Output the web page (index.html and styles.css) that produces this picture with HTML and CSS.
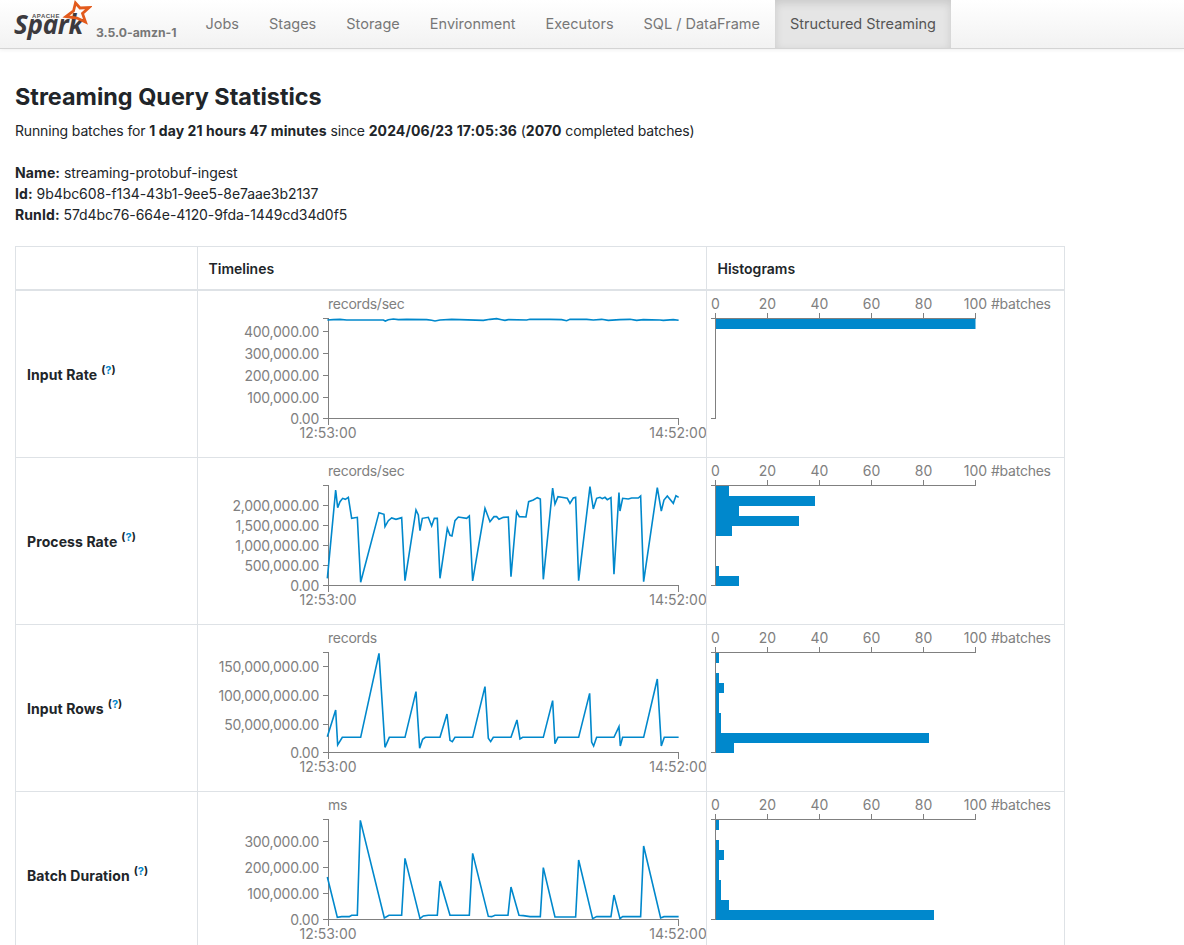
FILE: index.html
```html
<!DOCTYPE html>
<html lang="en">
<head>
<meta charset="utf-8">
<title>Streaming Query Statistics</title>
<link rel="stylesheet" href="styles.css">
</head>
<body>
<nav class="navbar">
  <a class="brand">
    <span class="logo">
      <span class="apache">APACHE</span>
      <span class="spark">Spark</span>
      <svg class="star" viewBox="0 0 34 30" width="34" height="30"><polygon class="star-shape" points="17.500,3 22,8 31,7.500 24.500,13.500 27.500,22 19,18 8,16.500 15.500,11"/></svg>
    </span>
    <span class="version">3.5.0-amzn-1</span>
  </a>
  <ul class="tabs">
    <li class="tab">Jobs</li>
    <li class="tab">Stages</li>
    <li class="tab">Storage</li>
    <li class="tab">Environment</li>
    <li class="tab">Executors</li>
    <li class="tab">SQL / DataFrame</li>
    <li class="tab active">Structured Streaming</li>
  </ul>
</nav>
<main class="content">
  <h3 class="title">Streaming Query Statistics</h3>
  <p class="summary">Running batches for <strong>1 day 21 hours 47 minutes</strong> since <strong>2024/06/23 17:05:36</strong> (<strong>2070</strong> completed batches)</p>
  <p class="meta"><strong>Name:</strong> streaming-protobuf-ingest<br><strong>Id:</strong> 9b4bc608-f134-43b1-9ee5-8e7aae3b2137<br><strong>RunId:</strong> 57d4bc76-664e-4120-9fda-1449cd34d0f5</p>
  <table class="stats">
    <colgroup><col class="c1"><col class="c2"><col class="c3"></colgroup>
    <thead><tr><th></th><th>Timelines</th><th>Histograms</th></tr></thead>
    <tbody>
      <tr>
        <td class="label"><strong>Input Rate</strong> <sup class="help">(<a>?</a>)</sup></td>
        <td class="chart"><svg class="plot" width="508" height="166">
          <text class="t unit" x="130" y="18">records/sec</text>
          <path class="axis" d="M124.500 27.500H130.500V127.500H480.500V133.500M130.500 127.500V133.500M124.500 40.500H130.500M124.500 62.500H130.500M124.500 84.500H130.500M124.500 106.500H130.500M124.500 127.500H130.500"/>
          <text class="t yl" x="121" y="40">400,000.00</text><text class="t yl" x="121" y="62">300,000.00</text><text class="t yl" x="121" y="84">200,000.00</text><text class="t yl" x="121" y="106">100,000.00</text><text class="t yl" x="121" y="127.500">0.00</text>
          <text class="t xl" x="130" y="147">12:53:00</text><text class="t xl" x="480" y="147">14:52:00</text>
          <g transform="translate(122 4) scale(.3333)"><polyline class="line" points="22,75 40,74 60,73 80,75 190,75 196,78 205,74 220,72 235,74 260,73 320,74 335,76 345,78 360,75 395,73 420,74 490,76 510,73 530,71 545,74 555,76 565,74 620,75 630,73 690,73 725,74 740,77 750,73 800,73 820,75 845,73 865,76 900,74 930,73 950,76 970,74 1020,75 1030,76 1060,74 1076,76"/></g>
        </svg></td>
        <td class="chart"><svg class="plot" width="358" height="166">
          <rect class="bar" x="8.500" y="28" width="260" height="10"/>
          <path class="axis" d="M3.500 27.500H8.500V127.500H3.500M8.500 21.500V27.500H268.500V21.500M60.500 21.500V27.500M112.500 21.500V27.500M164.500 21.500V27.500M216.500 21.500V27.500"/>
          <text class="t xl" x="8.500" y="18">0</text><text class="t xl" x="60.500" y="18">20</text><text class="t xl" x="112.500" y="18">40</text><text class="t xl" x="164.500" y="18">60</text><text class="t xl" x="216.500" y="18">80</text><text class="t xl" x="268.500" y="18">100</text><text class="t unit" x="284" y="18">#batches</text>
        </svg></td>
      </tr>
      <tr>
        <td class="label"><strong>Process Rate</strong> <sup class="help">(<a>?</a>)</sup></td>
        <td class="chart"><svg class="plot" width="508" height="166">
          <text class="t unit" x="130" y="18">records/sec</text>
          <path class="axis" d="M124.500 27.500H130.500V127.500H480.500V133.500M130.500 127.500V133.500M124.500 47.500H130.500M124.500 67.500H130.500M124.500 87.500H130.500M124.500 107.500H130.500M124.500 127.500H130.500"/>
          <text class="t yl" x="121" y="47">2,000,000.00</text><text class="t yl" x="121" y="67">1,500,000.00</text><text class="t yl" x="121" y="87">1,000,000.00</text><text class="t yl" x="121" y="107">500,000.00</text><text class="t yl" x="121" y="127.500">0.00</text>
          <text class="t xl" x="130" y="147">12:53:00</text><text class="t xl" x="480" y="147">14:52:00</text>
          <g transform="translate(122 2) scale(.3333)"><polyline class="line" points="22,355 47,90 53,143 60,125 68,115 76,118 85,112 95,175 112,172 122,367 177,158 192,163 195,200 205,182 215,174 228,178 245,173 255,362 288,150 295,165 300,212 307,175 325,172 335,198 343,175 352,175 360,355 382,205 390,226 396,228 405,182 415,171 440,175 448,168 458,363 495,145 510,185 522,170 530,170 537,178 550,172 565,171 573,350 590,155 598,170 618,171 626,125 640,120 652,113 661,117 670,358 698,84 705,132 714,110 725,112 742,115 750,130 760,114 767,112 776,362 810,80 820,147 830,115 840,112 847,116 855,112 862,119 873,113 882,343 897,98 900,153 908,115 925,117 935,114 955,114 962,108 971,365 1012,83 1024,153 1032,120 1042,108 1060,130 1068,107 1076,112"/></g>
        </svg></td>
        <td class="chart"><svg class="plot" width="358" height="166">
          <rect class="bar" x="8.500" y="28" width="13.500" height="10"/><rect class="bar" x="8.500" y="38" width="99.500" height="10"/><rect class="bar" x="8.500" y="48" width="23.500" height="10"/><rect class="bar" x="8.500" y="58" width="83.500" height="10"/><rect class="bar" x="8.500" y="68" width="16.500" height="10"/><rect class="bar" x="8.500" y="108" width="3.500" height="10"/><rect class="bar" x="8.500" y="118" width="23.500" height="10"/>
          <path class="axis" d="M3.500 27.500H8.500V127.500H3.500M8.500 21.500V27.500H268.500V21.500M60.500 21.500V27.500M112.500 21.500V27.500M164.500 21.500V27.500M216.500 21.500V27.500"/>
          <text class="t xl" x="8.500" y="18">0</text><text class="t xl" x="60.500" y="18">20</text><text class="t xl" x="112.500" y="18">40</text><text class="t xl" x="164.500" y="18">60</text><text class="t xl" x="216.500" y="18">80</text><text class="t xl" x="268.500" y="18">100</text><text class="t unit" x="284" y="18">#batches</text>
        </svg></td>
      </tr>
      <tr>
        <td class="label"><strong>Input Rows</strong> <sup class="help">(<a>?</a>)</sup></td>
        <td class="chart"><svg class="plot" width="508" height="166">
          <text class="t unit" x="130" y="18">records</text>
          <path class="axis" d="M124.500 27.500H130.500V127.500H480.500V133.500M130.500 127.500V133.500M124.500 41.500H130.500M124.500 70.500H130.500M124.500 99.500H130.500M124.500 127.500H130.500"/>
          <text class="t yl" x="121" y="41.500">150,000,000.00</text><text class="t yl" x="121" y="70">100,000,000.00</text><text class="t yl" x="121" y="99">50,000,000.00</text><text class="t yl" x="121" y="127.500">0.00</text>
          <text class="t xl" x="130" y="147">12:53:00</text><text class="t xl" x="480" y="147">14:52:00</text>
          <g transform="translate(122 5) scale(.3333)"><polyline class="line" points="22,320 47,240 53,345 67,322 122,322 177,70 195,352 208,322 255,322 288,185 299,355 308,328 316,322 360,322 381,252 390,331 397,335 405,322 458,322 495,170 505,325 512,335 520,322 573,322 591,270 600,327 608,322 670,322 698,212 705,341 714,322 776,322 809,190 815,336 821,348 830,322 882,322 897,290 901,348 908,322 971,322 1012,147 1024,348 1033,322 1076,322"/></g>
        </svg></td>
        <td class="chart"><svg class="plot" width="358" height="166">
          <rect class="bar" x="8.500" y="28" width="3.500" height="10"/><rect class="bar" x="8.500" y="48" width="3.500" height="10"/><rect class="bar" x="8.500" y="58" width="8.500" height="10"/><rect class="bar" x="8.500" y="68" width="3.500" height="20"/><rect class="bar" x="8.500" y="88" width="5.500" height="20"/><rect class="bar" x="8.500" y="108" width="213.500" height="10"/><rect class="bar" x="8.500" y="118" width="18.500" height="10"/>
          <path class="axis" d="M3.500 27.500H8.500V127.500H3.500M8.500 21.500V27.500H268.500V21.500M60.500 21.500V27.500M112.500 21.500V27.500M164.500 21.500V27.500M216.500 21.500V27.500"/>
          <text class="t xl" x="8.500" y="18">0</text><text class="t xl" x="60.500" y="18">20</text><text class="t xl" x="112.500" y="18">40</text><text class="t xl" x="164.500" y="18">60</text><text class="t xl" x="216.500" y="18">80</text><text class="t xl" x="268.500" y="18">100</text><text class="t unit" x="284" y="18">#batches</text>
        </svg></td>
      </tr>
      <tr>
        <td class="label"><strong>Batch Duration</strong> <sup class="help">(<a>?</a>)</sup></td>
        <td class="chart"><svg class="plot" width="508" height="166">
          <text class="t unit" x="130" y="18">ms</text>
          <path class="axis" d="M124.500 27.500H130.500V127.500H480.500V133.500M130.500 127.500V133.500M124.500 49.500H130.500M124.500 75.500H130.500M124.500 101.500H130.500M124.500 127.500H130.500"/>
          <text class="t yl" x="121" y="49">300,000.00</text><text class="t yl" x="121" y="75">200,000.00</text><text class="t yl" x="121" y="101">100,000.00</text><text class="t yl" x="121" y="127.500">0.00</text>
          <text class="t xl" x="130" y="147">12:53:00</text><text class="t xl" x="480" y="147">14:52:00</text>
          <g transform="translate(122 3) scale(.3333)"><polyline class="line" points="22,246 52,367 65,365 88,365 95,361 112,361 121,76 193,369 207,361 245,361 255,190 300,371 310,363 325,361 352,361 360,258 390,361 448,361 458,175 505,364 515,365 525,361 564,361 573,276 597,361 610,362 630,365 661,365 670,218 705,366 767,366 776,195 818,371 830,365 873,365 882,300 900,371 908,365 962,365 971,153 1022,369 1032,365 1076,365"/></g>
        </svg></td>
        <td class="chart"><svg class="plot" width="358" height="166">
          <rect class="bar" x="8.500" y="28" width="3.500" height="10"/><rect class="bar" x="8.500" y="48" width="3.500" height="10"/><rect class="bar" x="8.500" y="58" width="8.500" height="10"/><rect class="bar" x="8.500" y="68" width="3.500" height="20"/><rect class="bar" x="8.500" y="88" width="5.500" height="20"/><rect class="bar" x="8.500" y="108" width="13.500" height="10"/><rect class="bar" x="8.500" y="118" width="218.500" height="10"/>
          <path class="axis" d="M3.500 27.500H8.500V127.500H3.500M8.500 21.500V27.500H268.500V21.500M60.500 21.500V27.500M112.500 21.500V27.500M164.500 21.500V27.500M216.500 21.500V27.500"/>
          <text class="t xl" x="8.500" y="18">0</text><text class="t xl" x="60.500" y="18">20</text><text class="t xl" x="112.500" y="18">40</text><text class="t xl" x="164.500" y="18">60</text><text class="t xl" x="216.500" y="18">80</text><text class="t xl" x="268.500" y="18">100</text><text class="t unit" x="284" y="18">#batches</text>
        </svg></td>
      </tr>
    </tbody>
  </table>
</main>
</body>
</html>
```

FILE: styles.css
```css
html { overflow: hidden; height: 945px; }
body {
  margin: 0;
  height: 945px;
  overflow: hidden;
  font-family: Inter, "Liberation Sans", sans-serif;
  font-size: 14px;
  line-height: 21px;
  color: #212529;
  background: #fff;
}
strong { font-weight: 700; letter-spacing: .1px; }

.navbar {
  display: flex;
  align-items: stretch;
  height: 48px;
  background: linear-gradient(#ffffff, #f2f2f2);
  border-bottom: 1px solid #d4d4d4;
  box-shadow: 0 1px 4px rgba(0, 0, 0, .065);
}
.brand { display: flex; align-items: flex-start; width: 190.500px; flex: none; }
.logo { position: relative; display: block; width: 96px; height: 48px; flex: none; }
.star { position: absolute; left: 58px; top: 0; }
.star-shape { fill: none; stroke: #e25a1c; stroke-width: 2.800; stroke-linejoin: miter; }
.apache {
  position: absolute; left: 32px; top: 11px;
  font: 700 6px/10px "Liberation Sans", sans-serif;
  letter-spacing: .5px;
  color: #555;
}
.spark {
  position: absolute; left: 14px; top: 7px;
  font: italic 700 26px/34px "Open Sans", sans-serif;
  letter-spacing: -.3px;
  color: #3c3a3e;
}
.version { font-size: 12.200px; font-weight: 700; color: #777; margin-top: 23px; line-height: 20px; }
.tabs { display: flex; list-style: none; margin: 0; padding: 0; }
.tab { padding: 14px 15px 0; font-size: 14.500px; line-height: 20px; color: #777; }
.tab.active {
  background: #e5e5e5;
  box-shadow: inset 0 3px 8px rgba(0, 0, 0, .125);
  color: #555;
}

.content { padding: 0 15px; }
.title { margin: 33px 0 0; font-size: 23.400px; line-height: 29px; font-weight: 700; }
.summary { margin: 9px 0 0; letter-spacing: -.15px; }
.meta { margin: 21px 0 0; letter-spacing: -.07px; }

.stats {
  margin-top: 21px;
  width: 1049px;
  table-layout: fixed;
  border-collapse: collapse;
}
.c1 { width: 182px; }
.c2 { width: 509px; }
.c3 { width: 358px; }
.stats th, .stats td { border: 1px solid #dee2e6; padding: 0; }
.stats th {
  height: 42px;
  padding: 0 10.500px;
  border-bottom-width: 2px;
  text-align: left;
  font-weight: 600;
  font-size: 14px;
}
.stats .label { padding: 0 11px; height: 166px; vertical-align: middle; font-size: 14px; }
.help { font-size: 11px; line-height: 0; font-weight: 700; }
.help a { color: #0088cc; }
.stats .chart { vertical-align: top; }
.plot { display: block; overflow: hidden; }

.t { font-family: Inter, "Liberation Sans", sans-serif; font-size: 14px; fill: #808080; }
.yl { text-anchor: end; dominant-baseline: central; letter-spacing: -.25px; }
.xl { text-anchor: middle; }
.unit { letter-spacing: -.25px; }
.axis { fill: none; stroke: #808080; stroke-width: 1; shape-rendering: crispEdges; }
.line { fill: none; stroke: #0088cc; stroke-width: 4.800; }
.bar { fill: #0088cc; }
```
